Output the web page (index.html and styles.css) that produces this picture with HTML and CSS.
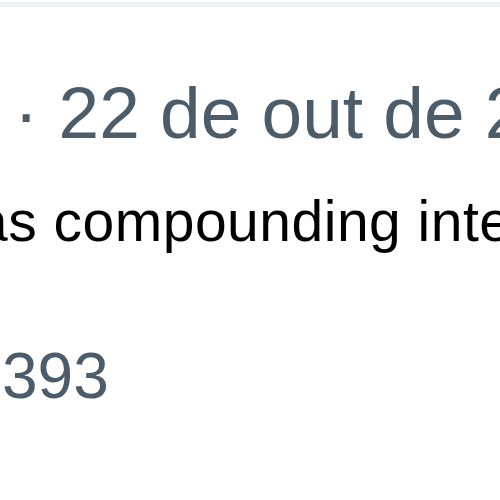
FILE: index.html
```html
<!DOCTYPE html>
<html lang="pt">
<head>
<meta charset="utf-8">
<link rel="stylesheet" href="styles.css">
</head>
<body>
<main class="tweet">
  <div class="divider"></div>
  <div class="meta">· 22 de out de 2022</div>
  <div class="text">as compounding interest</div>
  <div class="stats">393</div>
</main>
</body>
</html>
```
FILE: styles.css
```css
html, body {
  margin: 0;
  padding: 0;
  background: #ffffff;
  overflow: hidden;
}
.tweet {
  width: 500px;
  height: 500px;
  display: flex;
  flex-direction: column;
  font-family: "Liberation Sans", Arial, sans-serif;
  overflow: hidden;
}
.divider {
  margin-top: 2px;
  height: 5px;
  background: #edf2f4;
  flex: none;
}
.meta {
  margin-top: 69px;
  font-size: 73px;
  line-height: 73px;
  color: #4c5c69;
  white-space: nowrap;
  padding-left: 14px;
}
.text {
  margin-top: 44px;
  font-size: 57px;
  line-height: 56px;
  letter-spacing: 0.5px;
  color: #000000;
  white-space: nowrap;
  text-indent: -24px;
}
.stats {
  margin-top: 95px;
  font-size: 64px;
  line-height: 64px;
  color: #4c5c69;
  white-space: nowrap;
  padding-left: 2px;
}
```
